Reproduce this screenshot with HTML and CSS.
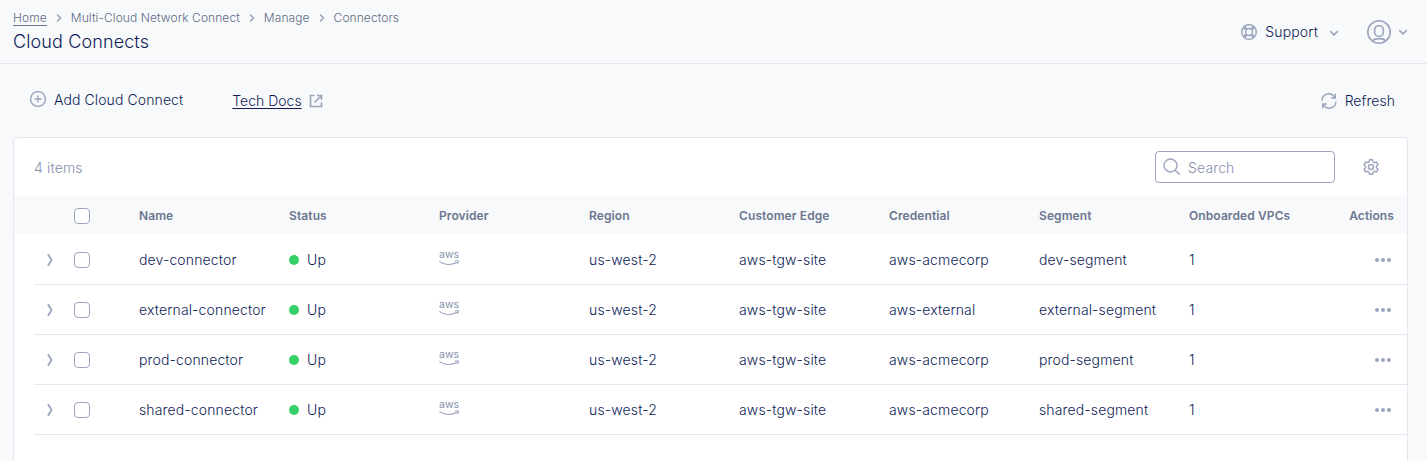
FILE: index.html
```html
<!DOCTYPE html>
<html lang="en">
<head>
<meta charset="utf-8">
<title>Cloud Connects</title>
<link rel="stylesheet" href="styles.css">
</head>
<body>
<svg class="sprite" width="0" height="0">
  <symbol id="sep" viewBox="0 0 6 10"><path d="M1 1.5 4.500 5 1 8.500"/></symbol>
  <symbol id="down" viewBox="0 0 10 8"><path d="M1.2 2.2 5 5.800 8.800 2.200"/></symbol>
  <symbol id="expand" viewBox="0 0 8 14"><path d="M2 1.200 5.500 7 2 12.800"/></symbol>
  <symbol id="dots" viewBox="0 0 16 4"><circle cx="2" cy="2" r="2"/><circle cx="8" cy="2" r="2"/><circle cx="14" cy="2" r="2"/></symbol>
  <symbol id="swoosh" viewBox="0 0 20 6"><path d="M.3 1.300C5 5.200 12.500 5.500 18 2.300"/><path d="M16 1C17.500.7 19 .7 19.300 1S19 3.200 18.200 3.900"/></symbol>
</svg>
<header class="topbar">
  <div class="heading">
    <nav class="crumbs">
      <a class="home">Home</a><svg class="sep"><use href="#sep"/></svg>
      <a>Multi-Cloud Network Connect</a><svg class="sep"><use href="#sep"/></svg>
      <a>Manage</a><svg class="sep"><use href="#sep"/></svg>
      <a>Connectors</a>
    </nav>
    <h1>Cloud Connects</h1>
  </div>
  <div class="account">
    <svg class="buoy" viewBox="0 0 16 16"><circle cx="8" cy="8" r="7.300"/><circle cx="8" cy="8" r="3.500"/><path d="M5 6 2.500 3.600M6 5 3.600 2.500M11 6l2.500-2.400M10 5l2.400-2.500M5 10l-2.500 2.400M6 11l-2.400 2.500M11 10l2.500 2.400M10 11l2.400 2.500"/></svg>
    <span class="support">Support</span>
    <svg class="down"><use href="#down"/></svg>
    <svg class="user" viewBox="0 0 24 24"><circle cx="12" cy="12" r="11.200"/><rect x="7.700" y="5.700" width="8.600" height="10.600" rx="3.900"/><path d="M5.800 20.600c1.200-1.400 3.200-2 6.200-2s5 .6 6.200 2"/></svg>
    <svg class="down user-down"><use href="#down"/></svg>
  </div>
</header>
<div class="actions">
  <svg class="plus" viewBox="0 0 16 16"><circle cx="8" cy="8" r="7.400"/><path d="M8 4.500v7M4.500 8h7"/></svg>
  <span class="add">Add Cloud Connect</span>
  <a class="docs">Tech Docs</a>
  <svg class="external" viewBox="0 0 14 14"><path d="M5.500 1.500H1.500v11h11V8.500M8 1.500h4.500V6M12.500 1.500 5.500 8.500"/></svg>
  <svg class="refresh-icon" viewBox="0 0 16 16"><path d="M1.200 7.600A6.500 6.500 0 0 1 13.500 4.400M14.300.8V5h-4.200M14.800 8.400A6.500 6.500 0 0 1 2.500 11.600M1.700 15.200V11h4.200"/></svg>
  <span class="refresh">Refresh</span>
</div>
<main class="card">
  <div class="toolbar">
    <span class="count">4 items</span>
    <div class="search"><svg viewBox="0 0 18 18"><circle cx="7.500" cy="7.500" r="6.500"/><path d="m12.200 12.200 4.600 4.300"/></svg><span class="placeholder">Search</span></div>
    <svg class="gear" viewBox="0 0 16 16"><path d="M6.500.8h3l.5 2.100 1.400.8 2.100-.6 1.500 2.600L13.400 7.200v1.600l1.600 1.500-1.500 2.600-2.100-.6-1.400.8-.5 2.100h-3L6 13.100l-1.400-.8-2.100.6L1 10.300l1.600-1.500V7.200L1 5.700l1.500-2.600 2.100.6L6 2.900z"/><circle cx="8" cy="8" r="2.500"/></svg>
  </div>
  <div class="row head">
    <span></span><span class="box"></span><span>Name</span><span>Status</span><span>Provider</span><span>Region</span><span>Customer Edge</span><span>Credential</span><span>Segment</span><span>Onboarded VPCs</span><span class="last">Actions</span>
  </div>
  <div class="row">
    <svg class="expand"><use href="#expand"/></svg><span class="box"></span><span>dev-connector</span><span class="status">Up</span><span class="aws">aws<svg><use href="#swoosh"/></svg></span><span>us-west-2</span><span>aws-tgw-site</span><span>aws-acmecorp</span><span>dev-segment</span><span>1</span><svg class="dots"><use href="#dots"/></svg>
  </div>
  <div class="row">
    <svg class="expand"><use href="#expand"/></svg><span class="box"></span><span>external-connector</span><span class="status">Up</span><span class="aws">aws<svg><use href="#swoosh"/></svg></span><span>us-west-2</span><span>aws-tgw-site</span><span>aws-external</span><span>external-segment</span><span>1</span><svg class="dots"><use href="#dots"/></svg>
  </div>
  <div class="row">
    <svg class="expand"><use href="#expand"/></svg><span class="box"></span><span>prod-connector</span><span class="status">Up</span><span class="aws">aws<svg><use href="#swoosh"/></svg></span><span>us-west-2</span><span>aws-tgw-site</span><span>aws-acmecorp</span><span>prod-segment</span><span>1</span><svg class="dots"><use href="#dots"/></svg>
  </div>
  <div class="row">
    <svg class="expand"><use href="#expand"/></svg><span class="box"></span><span>shared-connector</span><span class="status">Up</span><span class="aws">aws<svg><use href="#swoosh"/></svg></span><span>us-west-2</span><span>aws-tgw-site</span><span>aws-acmecorp</span><span>shared-segment</span><span>1</span><svg class="dots"><use href="#dots"/></svg>
  </div>
</main>
</body>
</html>
```
FILE: styles.css
```css
* { box-sizing: border-box; }
body {
  margin: 0;
  height: 461px;
  overflow: hidden;
  display: flex;
  flex-direction: column;
  background: #f7f9fa;
  color: #0f1e57;
  font: 300 14px/20px Inter, sans-serif;
  letter-spacing: 0.14px;
}
svg { flex: none; fill: none; stroke: #9ba5bd; stroke-width: 1.4; }
.sprite { position: absolute; }
.topbar {
  flex: none;
  height: 64px;
  display: flex;
  justify-content: space-between;
  padding: 10px 19px 0 13px;
  border-bottom: 1px solid #e4e6f1;
}
.crumbs { display: flex; align-items: center; height: 16px; font-size: 12px; line-height: 16px; font-weight: 300; color: #5f6a86; letter-spacing: 0.08px; }
.home { border-bottom: 1px solid #6b7690; line-height: 14px; }
.sep { width: 6px; height: 10px; margin: 0 9px; stroke-width: 1.6; }
h1 { margin: 4px 0 0; font-size: 18px; line-height: 24px; font-weight: 300; letter-spacing: 0.12px; }
.account { display: flex; align-items: center; height: 44px; }
.buoy { width: 16px; height: 16px; margin-right: 8px; }
.down { width: 10px; height: 8px; margin: 2px 0 0 11px; stroke-width: 1.6; }
.user { width: 24px; height: 24px; margin-left: 28px; stroke-width: 1.6; }
.user-down { margin: 0 0 0 7px; }
.actions { flex: none; height: 73px; display: flex; align-items: center; padding: 0 32px 0 30px; }
.plus { width: 16px; height: 16px; margin: 0 8px 3px 0; }
.add { margin: 0 49px 1px 0; letter-spacing: 0.1px; }
.docs { text-decoration: underline; text-underline-offset: 2px; letter-spacing: 0; }
.external { width: 14px; height: 14px; margin-left: 7px; stroke-width: 1.6; }
.refresh-icon { width: 16px; height: 16px; margin: 0 8px 0 auto; }
.refresh { letter-spacing: 0.05px; }
.card {
  flex: none;
  height: 340px;
  margin: 0 19px 0 13px;
  background: #fff;
  border: 1px solid #e4e6f1;
  border-radius: 4px;
}
.toolbar { height: 58px; display: flex; align-items: center; padding: 0 28px 0 20px; }
.count { color: #858fac; padding-top: 2px; }
.search {
  width: 180px;
  height: 32px;
  margin: 0 28px 0 auto;
  display: flex;
  align-items: center;
  gap: 7px;
  padding-left: 7px;
  border: 1px solid #9ba5bd;
  border-radius: 4px;
  color: #858fac;
}
.placeholder { padding-top: 2px; }
.search svg { width: 18px; height: 18px; }
.gear { width: 16px; height: 16px; }
.row {
  display: grid;
  grid-template-columns: 40px 65px repeat(8, 150px) 1fr;
  align-items: center;
  height: 50px;
  margin-left: 20px;
  padding-top: 1px;
  border-bottom: 1px solid #e4e6f1;
}
.row.head {
  height: 38px;
  margin-left: 0;
  padding: 2px 0 0 20px;
  border: 0;
  background: #f7f9fa;
  font-size: 12px;
  font-weight: 600;
  color: #6b7690;
  letter-spacing: 0.1px;
}
.row.head + .row { height: 51px; }
.last { text-align: right; padding-right: 13px; }
.box { width: 16px; height: 16px; border: 1px solid #9ba5bd; border-radius: 4px; background: #fff; }
.expand { width: 8px; height: 14px; margin-left: 12px; stroke-width: 1.8; }
.status { display: flex; align-items: center; gap: 8px; }
.status::before { content: ""; width: 10px; height: 10px; border-radius: 50%; background: #35d068; }
.aws { display: flex; flex-direction: column; font-size: 10.500px; line-height: 10px; font-weight: 400; color: #858fac; letter-spacing: 0; padding-bottom: 4px; }
.aws svg { width: 20px; height: 6px; stroke-width: 1.1; }
.dots { width: 16px; height: 4px; justify-self: end; margin-right: 16px; fill: #9ba5bd; stroke: none; }
```
